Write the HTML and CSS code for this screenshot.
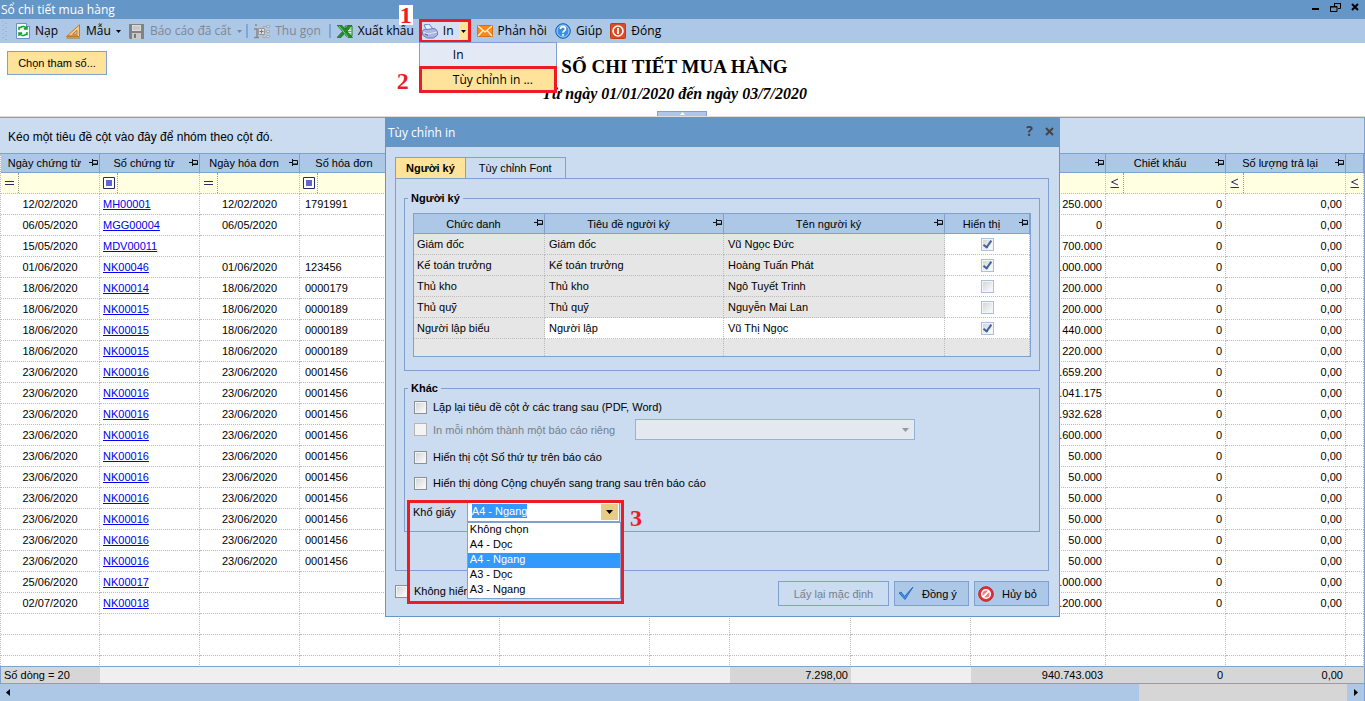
FILE: index.html
```html
<!DOCTYPE html>
<html lang="vi">
  <head>
    <meta charset="UTF-8" />
    <meta name="viewport" content="width=device-width, initial-scale=1.0" />
    <title>Sổ chi tiết mua hàng</title>
    <link rel="stylesheet" href="styles.css">
  </head>
  <body>
    <!-- shared icons -->
    <svg class="defs" aria-hidden="true">
      <symbol id="pin" viewBox="0 0 9 7">
        <path d="M0 3.5h3M3.5 0v7M4 1.5h4.5v4H4" fill="none" stroke="#111" />
        <path d="M4 5h5" stroke="#111" />
      </symbol>
      <symbol id="caret" viewBox="0 0 7 4">
        <path d="M0 0h7L3.5 4z" fill="currentColor" />
      </symbol>
    </svg>

    <header class="titlebar">
      <span>Sổ chi tiết mua hàng</span>
      <div class="window-buttons">
        <button aria-label="Thu nhỏ"><svg width="11" height="11" viewBox="0 0 11 11"><path d="M2 6h7v2H2z" /></svg></button>
        <button aria-label="Khôi phục"><svg width="11" height="11" viewBox="0 0 11 11"><path d="M4.5 4V1.500h6v5H8M.5 4.500h6.500v5H.5zM4 1.500h7M0 5h7" fill="none" stroke="#000" /></svg></button>
        <button aria-label="Đóng cửa sổ"><svg width="11" height="11" viewBox="0 0 11 11"><path d="M2 2l6 6M8 2L2 8" stroke="#000" stroke-width="2" /></svg></button>
      </div>
    </header>

    <nav class="toolbar">
      <svg class="grip" width="5" height="20" viewBox="0 0 5 20"><path d="M1 0v20M4 2v18" stroke="#8ba3c2" stroke-dasharray="1 3" /></svg>
      <button>
        <svg width="14" height="16" viewBox="0 0 14 16"><path d="M.5.5h10l3 3v12H.5z" fill="#f4f8fd" stroke="#6f8fc0" /><path d="M10.500.5v3h3" fill="#cddcf2" stroke="#6f8fc0" /><path d="M3 7V4.500h1.500C6 2.800 9 3.200 10 5L8 6H11V3" fill="none" stroke="#14a02c" stroke-width="1.500" /><path d="M11 9v2.500H9.500C8 13.200 5 12.800 4 11l2-1H3v3" fill="none" stroke="#14a02c" stroke-width="1.500" /></svg>
        Nạp
      </button>
      <button>
        <svg width="15" height="15" viewBox="0 0 15 15"><path d="M.5 12.500L13.500.8v11.700z" fill="#f6cd80" stroke="#c07c28" /><path d="M6.500 10.300l4.500-4v4z" fill="#adc7e7" stroke="#c07c28" /><path d="M.5 14h13.500" stroke="#b06c1c" /><path d="M3 12v-1M5 12v-1M7 12v-1M9 12v-1M11 12v-1" stroke="#9c5f14" /></svg>
        Mẫu
        <svg class="caret" width="5" height="3"><use href="#caret" /></svg>
      </button>
      <button class="disabled tight" disabled>
        <svg width="15" height="15" viewBox="0 0 15 15"><path d="M0 0h15v15H1l-1-1z" fill="#828282" /><path d="M3 1h9v6H3z" fill="#dcdcdc" /><path d="M4 3h7M4 5h7" stroke="#b5b5b5" /><path d="M3 9h9v6H3z" fill="#c8c8c8" /><path d="M5 10h2v4H5z" fill="#777" /></svg>
        Báo cáo đã cất
        <svg class="caret" width="5" height="3"><use href="#caret" /></svg>
      </button>
      <i class="sep"></i>
      <button class="disabled" disabled>
        <svg width="16" height="15" viewBox="0 0 16 15"><path d="M1 1h2M0 5h3v8M0 13.500h5" fill="none" stroke="#888" stroke-width="1.500" /><path d="M4.500 4.500h6v6h-6z" fill="#ddd" stroke="#999" /><path d="M7.500 5.500v4M5.500 7.500h4" stroke="#777" /><path d="M10.500 7.500h2M9 4V2.500h3M9 11v2.500h3" fill="none" stroke="#aaa" /><path d="M12.500 1.500h3v2h-3zM12.500 6.500h3v2h-3zM12.500 11.500h3v2h-3z" fill="#ddd" stroke="#aaa" /></svg>
        Thu gọn
      </button>
      <i class="sep"></i>
      <button class="export">
        <svg width="16" height="13" viewBox="0 0 16 13"><path d="M8 1h7v10H9z" fill="#e6f3e4" stroke="#1f7a25" /><path d="M10 4h5M10 6.500h5M10 9h5" stroke="#5cae5a" /><path d="M0 0h4.500L8 4l3.500-4H15L10 6.300l5.500 6.200H11L7.500 8.700 4 12.500H0l5.500-6z" fill="#238d2b" stroke="#0f5f18" stroke-width=".6" /><path d="M2 1l9 11" stroke="#7fd37c" /></svg>
        Xuất khẩu
      </button>
      <div class="print-split">
        <button>
          <svg width="16" height="15" viewBox="0 0 16 15"><path d="M2 1l5-1 4 5-6 2z" fill="#e8f2ff" stroke="#4d8ad6" /><path d="M.5 7.500C1 5 3 5.500 5 5.500l6-1c3 0 4.500 2 4.500 4.500v2l-4 3H5L.5 11z" fill="#a9b5e2" stroke="#6a78b8" /><path d="M1 8l5 2 9-2" fill="none" stroke="#dfe5fa" /><path d="M3 10l3 1.500" stroke="#4a5798" /></svg>
          In
        </button>
        <button class="arrow" aria-label="Chọn kiểu in"><svg class="caret" width="5" height="3"><use href="#caret" /></svg></button>
        <div class="print-menu">
          <button>In</button>
          <button class="active">Tùy chỉnh in ...</button>
        </div>
        <span class="step step-1">1</span>
        <span class="step step-2">2</span>
      </div>
      <button>
        <svg width="16" height="12" viewBox="0 0 16 12"><path d="M.5.5h15v11H.5z" fill="#f58b1f" stroke="#dc6e0e" /><path d="M1 1l7 6 7-6M1 11l5-5.500M15 11l-5-5.500" fill="none" stroke="#fff3df" stroke-width="1.200" /></svg>
        Phản hồi
      </button>
      <button>
        <svg width="16" height="16" viewBox="0 0 16 16"><circle cx="8" cy="8" r="7.300" fill="#3a8fe0" stroke="#1d5fae" /><circle cx="8" cy="8" r="6" fill="none" stroke="#a9d3f8" /><path d="M5.500 6c0-3.200 5-3.200 5 0 0 1.800-2.500 1.800-2.500 3.800M8 11v1.800" fill="none" stroke="#fff" stroke-width="1.700" /></svg>
        Giúp
      </button>
      <button>
        <svg width="16" height="16" viewBox="0 0 16 16"><rect x=".5" y=".5" width="15" height="15" rx="1" fill="#dd4a26" stroke="#c23a1a" /><circle cx="8" cy="8" r="5" fill="none" stroke="#fff" stroke-width="1.600" /><path d="M8 5v6" stroke="#fff" stroke-width="1.800" /></svg>
        Đóng
      </button>
    </nav>

    <section class="report-head">
      <button class="params">Chọn tham số...</button>
      <div class="report-title">
        <h1>SỔ CHI TIẾT MUA HÀNG</h1>
        <p>Từ ngày 01/01/2020 đến ngày 03/7/2020</p>
      </div>
      <button class="collapse" aria-label="Thu gọn phần đầu"><svg width="5" height="3" viewBox="0 0 5 3"><path d="M0 3h5L2.500 0z" fill="#fff" /></svg></button>
    </section>

    <main class="grid">
      <p class="group-panel">Kéo một tiêu đề cột vào đây để nhóm theo cột đó.</p>
      <div class="grid-body">
        <table class="data">
          <colgroup id="cols"></colgroup>
          <thead>
            <tr id="heads"></tr>
            <tr id="filters" class="filters"></tr>
          </thead>
          <tbody id="rows"></tbody>
        </table>
      </div>
      <table class="data totals">
        <colgroup id="total-cols"></colgroup>
        <tbody>
          <tr>
            <td class="sum">Số dòng = 20</td>
            <td></td><td></td><td></td><td></td><td></td><td></td>
            <td class="sum num">7.298,00</td>
            <td></td>
            <td class="sum num">940.743.003</td>
            <td class="sum num">0</td>
            <td class="sum num">0,00</td>
            <td class="sum"></td>
          </tr>
        </tbody>
      </table>
      <div class="scrollbar">
        <button class="thumb" aria-label="Cuộn trái"><svg width="4" height="7" viewBox="0 0 4 7"><path d="M4 0v7L0 3.500z" /></svg></button>
        <button class="right" aria-label="Cuộn phải"><svg width="4" height="7" viewBox="0 0 4 7"><path d="M0 0v7l4-3.500z" /></svg></button>
      </div>
    </main>

    <section class="dialog" role="dialog" aria-labelledby="dialog-title">
      <header class="dialog-title">
        <span id="dialog-title">Tùy chỉnh in</span>
        <div class="dialog-buttons">
          <button aria-label="Trợ giúp">?</button>
          <button aria-label="Đóng hộp thoại"><svg width="9" height="9" viewBox="0 0 9 9"><path d="M1 1l7 7M8 1L1 8" stroke="#444" stroke-width="2" /></svg></button>
        </div>
      </header>

      <div class="dialog-body">
        <div class="tabs">
          <button class="tab selected">Người ký</button>
          <button class="tab">Tùy chỉnh Font</button>
        </div>
        <div class="panel">
          <fieldset>
            <legend>Người ký</legend>
            <table class="signers">
              <colgroup><col class="c-role"><col class="c-head"><col><col class="c-show"></colgroup>
              <thead>
                <tr>
                  <th>Chức danh<svg class="pin"><use href="#pin" /></svg></th>
                  <th>Tiêu đề người ký<svg class="pin"><use href="#pin" /></svg></th>
                  <th>Tên người ký<svg class="pin"><use href="#pin" /></svg></th>
                  <th>Hiển thị<svg class="pin"><use href="#pin" /></svg></th>
                </tr>
              </thead>
              <tbody>
                <tr><td>Giám đốc</td><td>Giám đốc</td><td>Vũ Ngọc Đức</td><td class="show"><input type="checkbox" aria-label="Hiển thị Giám đốc" checked></td></tr>
                <tr><td>Kế toán trưởng</td><td>Kế toán trưởng</td><td>Hoàng Tuấn Phát</td><td class="show"><input type="checkbox" aria-label="Hiển thị Kế toán trưởng" checked></td></tr>
                <tr><td>Thủ kho</td><td>Thủ kho</td><td>Ngô Tuyết Trinh</td><td class="show"><input type="checkbox" aria-label="Hiển thị Thủ kho"></td></tr>
                <tr><td>Thủ quỹ</td><td>Thủ quỹ</td><td>Nguyễn Mai Lan</td><td class="show"><input type="checkbox" aria-label="Hiển thị Thủ quỹ"></td></tr>
                <tr><td>Người lập biểu</td><td class="edit">Người lập</td><td class="edit">Vũ Thị Ngọc</td><td class="show"><input type="checkbox" aria-label="Hiển thị Người lập biểu" checked></td></tr>
                <tr class="rest"><td></td><td></td><td></td><td></td></tr>
              </tbody>
            </table>
          </fieldset>

          <fieldset class="other">
            <legend>Khác</legend>
            <label class="check"><input type="checkbox">Lặp lại tiêu đề cột ở các trang sau (PDF, Word)</label>
            <div class="group-row">
              <label class="check off"><input type="checkbox" disabled>In mỗi nhóm thành một báo cáo riêng</label>
              <div class="select-wrap">
                <select disabled aria-label="Nhóm báo cáo"><option></option></select>
                <svg class="caret" width="7" height="4"><use href="#caret" /></svg>
              </div>
            </div>
            <label class="check">
              <input type="checkbox">Hiển thị cột Số thứ tự trên báo cáo
            </label>
            <label class="check">
              <input type="checkbox">Hiển thị dòng Cộng chuyển sang trang sau trên báo cáo
            </label>
            <div class="paper">
              <label for="paper">Khổ giấy</label>
              <div class="combo">
                <input id="paper" type="text" value="A4 - Ngang">
                <button aria-label="Mở danh sách khổ giấy"><svg class="caret" width="7" height="4"><use href="#caret" /></svg></button>
                <select class="paper-list" size="5" aria-label="Danh sách khổ giấy">
                  <option>Không chọn</option>
                  <option>A4 - Dọc</option>
                  <option selected>A4 - Ngang</option>
                  <option>A3 - Dọc</option>
                  <option>A3 - Ngang</option>
                </select>
              </div>
              <span class="frame"></span>
              <span class="step step-3">3</span>
            </div>
          </fieldset>
        </div>

        <footer class="dialog-foot">
          <label class="check"><input type="checkbox">Không hiển</label>
          <button disabled class="reset">Lấy lại mặc định</button>
          <button class="ok">
            <svg width="16" height="15" viewBox="0 0 16 15"><path d="M1 7l2-1 3.500 4.500L15 1 7 13.500z" fill="#3f8fe8" stroke="#1762b8" stroke-width=".8" /></svg>
            Đồng ý
          </button>
          <button class="cancel">
            <svg width="16" height="16" viewBox="0 0 16 16"><circle cx="8" cy="8" r="7.300" fill="#e03238" stroke="#c2202a" /><circle cx="8" cy="8" r="4.300" fill="#f07a7c" stroke="#fff" stroke-width="1.500" /><path d="M5 11l6-6" stroke="#fff" stroke-width="1.800" /></svg>
            Hủy bỏ
          </button>
        </footer>
      </div>
    </section>
    <script src="script.js"></script>
  </body>
</html>
```
FILE: styles.css
```css
* {
  box-sizing: border-box;
}

html,
body {
  height: 100%;
}

body {
  margin: 0;
  display: flex;
  flex-direction: column;
  position: relative;
  overflow: hidden;
  background: #fff;
  color: #000;
  font: 11px/14px "Liberation Sans", Arial, sans-serif;
}

button,
input,
select {
  font: inherit;
  color: inherit;
  margin: 0;
  padding: 0;
  border: 0;
  border-radius: 0;
  background: none;
}

.defs {
  position: absolute;
  width: 0;
  height: 0;
}

/* window title */
.titlebar {
  display: flex;
  justify-content: space-between;
  align-items: center;
  height: 19px;
  padding: 0 4px 0 1px;
  background: #6496c8;
  color: #fff;
  font: 12px/18px "Open Sans", "Noto Sans", sans-serif;
}

.window-buttons {
  display: flex;
  gap: 9px;
  padding-bottom: 4px;
}

.window-buttons button {
  display: flex;
}

/* toolbar */
.toolbar {
  display: flex;
  align-items: center;
  flex: none;
  height: 24px;
  padding-left: 2px;
  background: #adc7e7;
  font: 12px/14px "Open Sans", "Noto Sans", sans-serif;
}

.toolbar button {
  display: flex;
  align-items: center;
  gap: 5px;
  padding-right: 8px;
  white-space: nowrap;
}

.toolbar .grip {
  margin-right: 9px;
}

.toolbar .disabled {
  color: #808791;
}

.toolbar .tight {
  padding-right: 4px;
  gap: 6px;
}

.toolbar .export {
  padding-right: 5px;
}

.sep {
  width: 2px;
  height: 14px;
  margin-right: 6px;
  background: #7ea6d8;
}

.print-split {
  position: relative;
  display: flex;
  height: 24px;
  margin-right: 6px;
  background: #d5e1f2;
  border: 3px solid #ed1c24;
}

.toolbar .print-split > button {
  padding-right: 5px;
}

.toolbar .print-split > .arrow {
  padding: 0 2px;
  background: #ffe39b;
}

.print-menu {
  position: absolute;
  z-index: 2;
  top: 20px;
  left: -3px;
  width: 138px;
  background: #e3eaf5;
  border: 1px solid #7ea1cf;
  border-bottom: 0;
}

.print-menu button {
  width: 100%;
  height: 23px;
  padding-left: 33px;
}

.print-menu .active {
  width: 138px;
  height: 27px;
  margin-left: -1px;
  padding-left: 31px;
  background: #ffe39b;
  border: 3px solid #ed1c24;
}

.step {
  position: absolute;
  z-index: 3;
  color: #ed1c24;
  font: bold 24px/24px "Liberation Serif", "Times New Roman", serif;
}

.step-1 {
  top: -17px;
  left: -23px;
  padding: 0 1px;
  line-height: 20px;
  background: #fff;
}

.step-2 {
  top: 47px;
  left: -25px;
}

/* report header */
.report-head {
  position: relative;
  display: grid;
  grid-template-columns: 100px 1fr 116px;
  flex: none;
  height: 74px;
  padding: 8px 7px 0;
  border-bottom: 1px solid #ddd;
}

.params {
  height: 24px;
  background: #ffe39b;
  border: 1px solid #7ea1cf;
}

.report-title {
  text-align: center;
  font-family: "Liberation Serif", "Times New Roman", serif;
}

.report-title h1 {
  margin: 4px 0 6px;
  font-size: 19px;
  line-height: 24px;
}

.report-title p {
  margin: 0;
  font: italic bold 16px/18px "Liberation Serif", "Times New Roman", serif;
}

.collapse {
  position: absolute;
  bottom: 0;
  left: 657px;
  display: flex;
  justify-content: center;
  width: 50px;
  height: 5px;
  background: #adc7e7;
  border: 1px solid #7ea1cf;
  border-bottom: 0;
}

/* main grid */
.grid {
  display: flex;
  flex-direction: column;
  flex: 1;
  min-height: 0;
}

.group-panel {
  margin: 0;
  padding: 12px 8px 9px;
  font-size: 12px;
  background: #cbdbf0;
  border: 1px solid #7ea1cf;
  border-left: 0;
}

.grid-body {
  flex: 1;
  min-height: 0;
  overflow: hidden;
  border-left: 1px dotted #bbb;
  border-right: 1px solid #7ea1cf;
}

table {
  width: 100%;
  table-layout: fixed;
  border-collapse: separate;
  border-spacing: 0;
}

th {
  position: relative;
  height: 19px;
  padding: 0 11px 0 0;
  font-weight: normal;
  white-space: nowrap;
  background: #adc7e7;
  border-right: 1px solid #7ea1cf;
  border-bottom: 1px solid #7ea1cf;
}

.pin {
  position: absolute;
  top: 5px;
  right: 1px;
  width: 9px;
  height: 7px;
}

td {
  height: 21px;
  padding: 0 3px;
  white-space: nowrap;
  overflow: hidden;
  border-right: 1px dotted #bbb;
  border-bottom: 1px dotted #bbb;
}

.data .center {
  text-align: center;
}

.data .text {
  padding-left: 5px;
}

.num {
  text-align: right;
}

.data a {
  color: #0000ee;
}

.filters td {
  padding: 0;
  background: #ffffe1;
}

.filter {
  display: flex;
  height: 20px;
}

.filter span {
  display: grid;
  place-items: center;
  flex: none;
  width: 18px;
  border-right: 1px dotted #999;
}

.filter input {
  flex: 1;
  min-width: 0;
}

.totals {
  flex: none;
  border: 1px solid #7ea1cf;
}

.totals td {
  height: 16px;
  border: 0;
  background: #efefef;
}

.totals .sum {
  background: #d6d6d6;
}

.scrollbar {
  display: flex;
  justify-content: space-between;
  height: 17px;
  background: #d6d6d6;
  border-right: 1px solid #7ea1cf;
}

.scrollbar button {
  display: flex;
  align-items: center;
  background: #adc7e7;
}

.scrollbar .thumb {
  flex: 0 0 83.5%;
  padding-left: 6px;
}

.scrollbar .right {
  justify-content: center;
  width: 17px;
}

/* print options dialog */
.dialog {
  position: absolute;
  top: 117px;
  left: 385px;
  z-index: 1;
  width: 675px;
  background: #cbdbf0;
  border: 1px solid #6496c8;
}

.dialog-title {
  display: flex;
  justify-content: space-between;
  align-items: center;
  height: 29px;
  padding: 0 5px 0 2px;
  color: #fff;
  background: #6496c8;
  font: 12px/18px "Open Sans", "Noto Sans", sans-serif;
}

.dialog-buttons {
  display: flex;
  align-items: center;
  gap: 12px;
  padding-bottom: 3px;
  color: #444;
  font: bold 14px/16px "Open Sans", sans-serif;
}

.dialog-buttons button {
  display: flex;
}

.dialog-body {
  padding: 10px 10px 10px 9px;
}

.tabs {
  display: flex;
}

.tab {
  height: 21px;
  padding: 0 13px;
  border: 1px solid #7ea1cf;
  border-bottom: 0;
}

.tab + .tab {
  border-left: 0;
}

.tab.selected {
  padding: 0 10px;
  font-weight: bold;
  background: #ffe39b;
}

.panel {
  height: 393px;
  padding: 12px 8px;
  border: 1px solid #7ea1cf;
}

fieldset {
  min-width: 0;
  margin: 0 0 10px;
  padding: 8px 8px 13px;
  border: 1px solid #7ea1cf;
}

legend {
  margin-left: -5px;
  padding: 0 3px;
  font-weight: bold;
}

.signers {
  border: 1px solid #7ea1cf;
}

.signers th {
  height: 20px;
}

.signers td {
  background: #e6e6e6;
}

.signers td + td {
  padding-left: 4px;
}

.signers .edit,
.signers .show {
  background: #fff;
}

.signers .show {
  text-align: center;
}

.signers .rest td {
  height: 17px;
  border-bottom: 0;
}

.c-role {
  width: 131px;
}

.c-head {
  width: 179px;
}

.c-show {
  width: 85px;
}

input[type="checkbox"] {
  appearance: none;
  display: inline-block;
  flex: none;
  width: 13px;
  height: 13px;
  vertical-align: middle;
  background: linear-gradient(135deg, #cfd2d6, #fff);
  border: 1px solid #8c9095;
  box-shadow: inset 0 0 0 1px #f4f4f4;
}

.signers input[type="checkbox"] {
  display: block;
  margin: 0 auto;
  border-color: #a9c1e0;
}

input[type="checkbox"]:checked::before {
  content: "";
  display: block;
  width: 3px;
  height: 7px;
  margin: 0 0 0 3px;
  border: solid #40619c;
  border-width: 0 2px 2px 0;
  box-sizing: content-box;
  transform: rotate(35deg);
}

.check {
  display: flex;
  align-items: center;
  gap: 6px;
  white-space: nowrap;
}

.check.off {
  color: #777f8a;
}

.check.off input {
  background: #f4f4f4;
  border-color: #b5b5b5;
}

.other {
  display: flex;
  flex-direction: column;
  gap: 12px;
  margin: 0;
  padding: 5px 8px 9px;
}

.group-row {
  display: flex;
  gap: 20px;
  margin: -7px 0 -2px;
}

.other .check {
  padding-left: 1px;
}

.select-wrap {
  position: relative;
  width: 280px;
}

.select-wrap select {
  appearance: none;
  display: block;
  width: 100%;
  height: 21px;
  background: #efefef;
  border: 1px solid #7ea1cf;
}

.select-wrap .caret {
  position: absolute;
  top: 9px;
  right: 6px;
  color: #999;
}

.paper {
  position: relative;
  display: flex;
  align-items: center;
  gap: 11px;
}

.combo {
  position: relative;
  display: flex;
  justify-content: space-between;
  width: 153px;
  height: 20px;
  padding: 1px 1px 1px 4px;
  background: #fff;
  border: 1px solid #7ea1cf;
}

.combo input {
  width: 55px;
  height: 14px;
  color: #fff;
  background: #3399ff;
}

.combo button {
  display: grid;
  place-items: center;
  width: 17px;
  background: #e6cc86;
}

.paper-list {
  appearance: none;
  position: absolute;
  top: 19px;
  left: -1px;
  z-index: 1;
  width: 154px;
  height: 77px;
  overflow: hidden;
  background: #fff;
  border: 1px solid #7ea1cf;
}

.paper-list option {
  height: 15px;
  min-height: 15px;
  padding: 0 2px;
  line-height: 15px;
}

.paper-list option:checked {
  color: #fff;
  background: #3399ff linear-gradient(#3399ff, #3399ff);
}

.frame {
  position: absolute;
  top: -2px;
  left: -6px;
  z-index: 2;
  width: 217px;
  height: 104px;
  border: 3px solid #ed1c24;
  pointer-events: none;
}

.step-3 {
  top: 4px;
  left: 217px;
}

.dialog-foot {
  display: flex;
  gap: 5px;
  padding-top: 10px;
}

.dialog-foot .check {
  align-self: flex-start;
  margin-right: auto;
  padding-top: 3px;
}

.dialog-foot button {
  display: flex;
  align-items: center;
  gap: 8px;
  width: 75px;
  height: 25px;
  padding-left: 3px;
  background: #adc7e7;
  border: 1px solid #7ea1cf;
}

.dialog-foot .reset {
  justify-content: center;
  width: 111px;
  padding: 0;
  color: #777f8a;
  background: #cbdbf0;
}
```
FILE: script.js
```javascript
const columns = [
  { name: "Ngày chứng từ", width: 99, op: "=", cls: "center" },
  { name: "Số chứng từ", width: 100, op: "box" },
  { name: "Ngày hóa đơn", width: 100, op: "=", cls: "center" },
  { name: "Số hóa đơn", width: 100, op: "box", cls: "text" },
  { name: "", width: 100, op: "box" },
  { name: "", width: 150, op: "box" },
  { name: "", width: 80, op: "box" },
  { name: "", width: 121, op: "≤", cls: "num" },
  { name: "", width: 120, op: "≤", cls: "num" },
  { name: "", width: 135, op: "≤", cls: "num" },
  { name: "Chiết khấu", width: 120, op: "≤", cls: "num" },
  { name: "Số lượng trả lại", width: 120, op: "≤", cls: "num" },
  { name: "", width: 0, op: "≤", cls: "num" },
];

// date, voucher, invoice date, invoice number, amount
const vouchers = [
  ["12/02/2020", "MH00001", "12/02/2020", "1791991", "250.000"],
  ["06/05/2020", "MGG00004", "06/05/2020", "", "0"],
  ["15/05/2020", "MDV00011", "", "", "700.000"],
  ["01/06/2020", "NK00046", "01/06/2020", "123456", ".000.000"],
  ["18/06/2020", "NK00014", "18/06/2020", "0000179", "200.000"],
  ["18/06/2020", "NK00015", "18/06/2020", "0000189", "200.000"],
  ["18/06/2020", "NK00015", "18/06/2020", "0000189", "440.000"],
  ["18/06/2020", "NK00015", "18/06/2020", "0000189", "220.000"],
  ["23/06/2020", "NK00016", "23/06/2020", "0001456", ".659.200"],
  ["23/06/2020", "NK00016", "23/06/2020", "0001456", ".041.175"],
  ["23/06/2020", "NK00016", "23/06/2020", "0001456", ".932.628"],
  ["23/06/2020", "NK00016", "23/06/2020", "0001456", ".600.000"],
  ["23/06/2020", "NK00016", "23/06/2020", "0001456", "50.000"],
  ["23/06/2020", "NK00016", "23/06/2020", "0001456", "50.000"],
  ["23/06/2020", "NK00016", "23/06/2020", "0001456", "50.000"],
  ["23/06/2020", "NK00016", "23/06/2020", "0001456", "50.000"],
  ["23/06/2020", "NK00016", "23/06/2020", "0001456", "50.000"],
  ["23/06/2020", "NK00016", "23/06/2020", "0001456", "50.000"],
  ["25/06/2020", "NK00017", "", "", ".000.000"],
  ["02/07/2020", "NK00018", "", "", ".200.000"],
];

const icons = {
  "=": '<svg width="9" height="4" viewBox="0 0 9 4"><path d="M0 .5h9M0 3.500h9" stroke="#2b2b6b" /></svg>',
  "≤": '<svg width="9" height="10" viewBox="0 0 9 10"><path d="M8 1L1.500 4 8 7M.5 9.500H9" fill="none" stroke="#2b2b6b" /></svg>',
  box: '<svg width="12" height="12" viewBox="0 0 12 12"><path d="M.5.5h11v11H.5z" fill="#fff" stroke="#2b2b6b" /><path d="M3 3h6v6H3z" fill="#6464d0" /></svg>',
};

const cols = columns
  .map((c) => (c.width ? `<col style="width: ${c.width}px">` : "<col>"))
  .join("");
document.getElementById("cols").innerHTML = cols;
document.getElementById("total-cols").innerHTML = cols;

document.getElementById("heads").innerHTML = columns
  .map((c) => `<th>${c.name}${c.width ? '<svg class="pin"><use href="#pin" /></svg>' : ""}</th>`)
  .join("");

document.getElementById("filters").innerHTML = columns
  .map((c) => `<td><div class="filter"><span>${icons[c.op]}</span><input type="text" aria-label="Lọc ${c.name}"></div></td>`)
  .join("");

function row(v) {
  const link = v.length ? `<a href="#">${v[1]}</a>` : "";
  const zero = v.length ? ["0", "0,00"] : ["", ""];
  const cells = [v[0], link, v[2], v[3], "", "", "", "", "", v[4], ...zero, ""];
  return `<tr>${cells.map((t, i) => `<td class="${columns[i].cls || ""}">${t || ""}</td>`).join("")}</tr>`;
}

document.getElementById("rows").innerHTML = [...vouchers, [], [], []].map(row).join("");
```
